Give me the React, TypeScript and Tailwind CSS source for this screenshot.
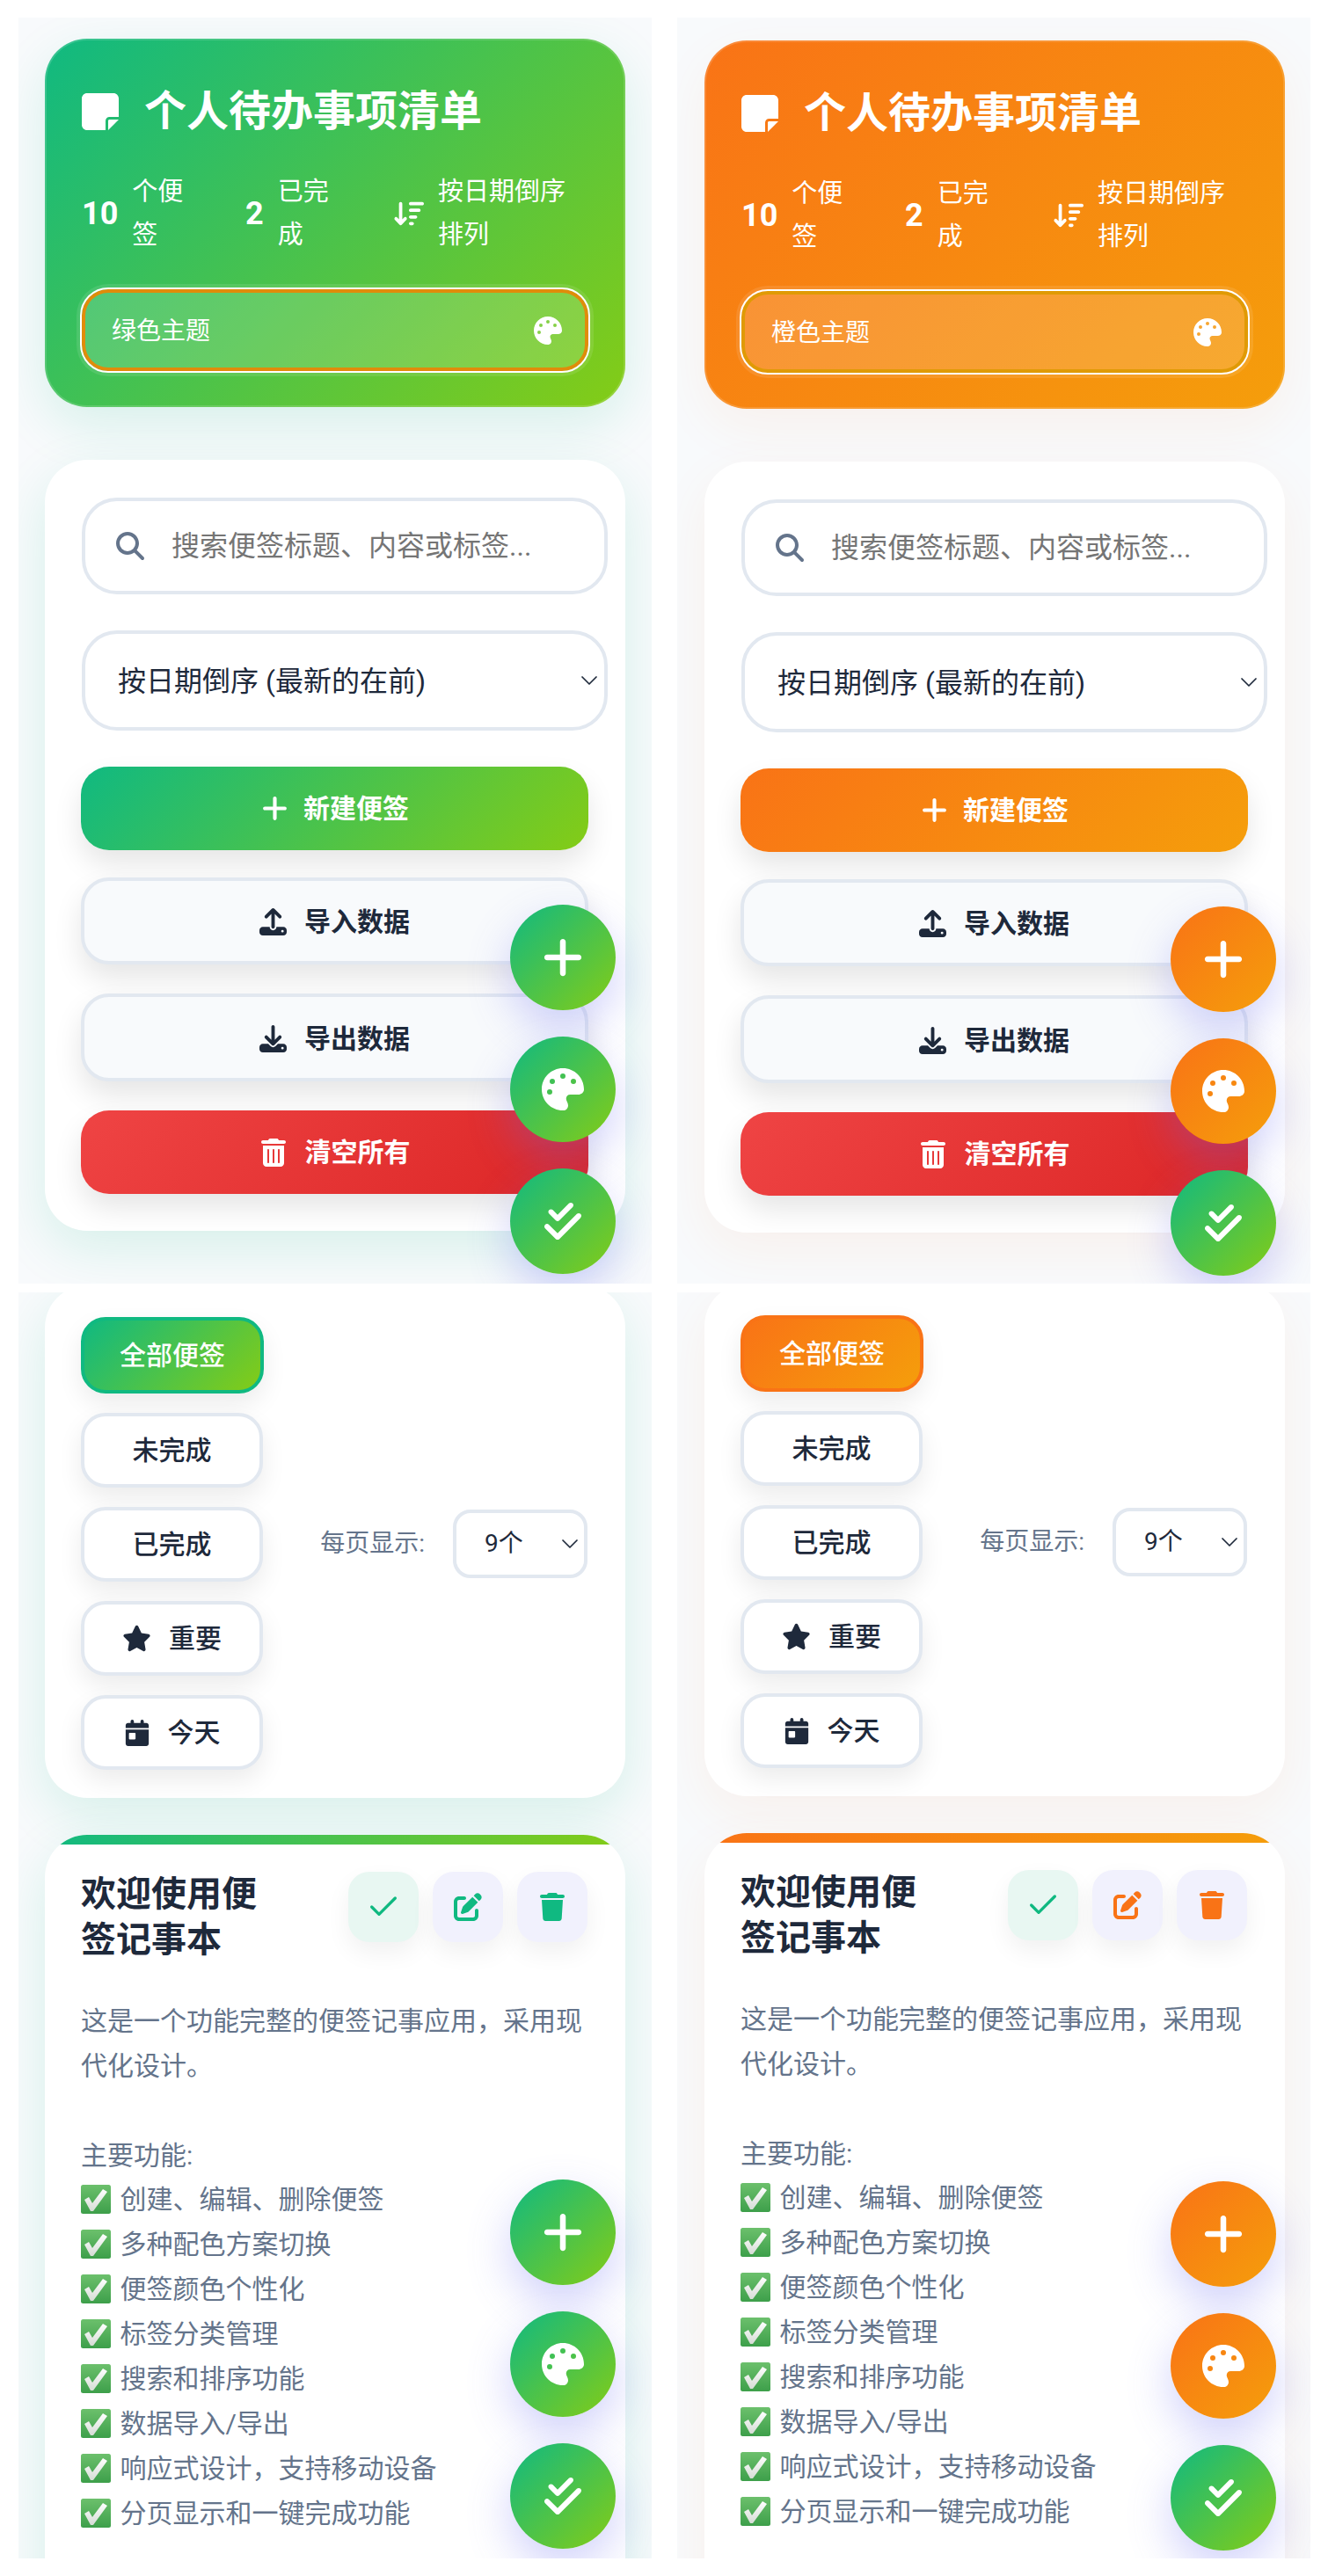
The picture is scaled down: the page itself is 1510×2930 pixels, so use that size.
import React from 'react';
import {
  FaNoteSticky, FaArrowDownWideShort, FaPalette, FaMagnifyingGlass, FaPlus, FaUpload,
  FaDownload, FaTrashCan, FaCheckDouble, FaStar, FaCalendarDay, FaPenToSquare, FaTrash,
} from 'react-icons/fa6';
import { Check, ChevronDown } from 'lucide-react';

type Theme = {
  name: string;
  gradient: string;
  bar: string;
  shadow: string;
  ring: string;
  filterBorder: string;
  accent: string;
  fab: string;
};

const green: Theme = {
  name: '绿色主题',
  gradient: 'bg-[linear-gradient(135deg,#10b981,#84cc16)]',
  bar: 'bg-[linear-gradient(90deg,#10b981,#84cc16)]',
  shadow: 'shadow-[0_20px_60px_rgba(16,185,129,0.14)]',
  ring: 'shadow-[inset_0_0_0_4px_#e08c0a,0_0_0_4px_rgba(255,255,255,0.1)]',
  filterBorder: 'border-[#10b981]',
  accent: 'text-[#10b981]',
  fab: 'bg-[linear-gradient(135deg,#10b981,#84cc16)]',
};

const orange: Theme = {
  name: '橙色主题',
  gradient: 'bg-[linear-gradient(135deg,#f97316,#f59e0b)]',
  bar: 'bg-[linear-gradient(90deg,#f97316,#f59e0b)]',
  shadow: 'shadow-[0_20px_60px_rgba(249,115,22,0.07)]',
  ring: 'shadow-[inset_0_0_0_4px_#e09a05,0_0_0_4px_rgba(255,255,255,0.1)]',
  filterBorder: 'border-[#f97316]',
  accent: 'text-[#f97316]',
  fab: 'bg-[linear-gradient(135deg,#f97316,#f59e0b)]',
};

const doneGradient = 'bg-[linear-gradient(135deg,#10b981,#84cc16)]';

const features = [
  '创建、编辑、删除便签',
  '多种配色方案切换',
  '便签颜色个性化',
  '标签分类管理',
  '搜索和排序功能',
  '数据导入/导出',
  '响应式设计，支持移动设备',
  '分页显示和一键完成功能',
];

const Fabs = ({ theme, className }: { theme: Theme; className: string }) => (
  <div className={`absolute flex flex-col gap-[30px] ${className}`}>
    <button className={`w-[120px] h-[120px] rounded-full flex items-center justify-center text-white shadow-[0_20px_50px_rgba(99,102,241,0.3)] ${theme.fab}`}>
      <FaPlus size={52} />
    </button>
    <button className={`w-[120px] h-[120px] rounded-full flex items-center justify-center text-white shadow-[0_20px_50px_rgba(99,102,241,0.3)] ${theme.fab}`}>
      <FaPalette size={48} />
    </button>
    <button className={`w-[120px] h-[120px] rounded-full flex items-center justify-center text-white shadow-[0_20px_50px_rgba(99,102,241,0.3)] ${doneGradient}`}>
      <FaCheckDouble size={48} />
    </button>
  </div>
);

const Stat = ({ value, label, width, labelWidth }: { value: React.ReactNode; label: string; width: string; labelWidth: string }) => (
  <div className={`flex items-center gap-[16px] ${width}`}>
    <span className="text-[36px] font-bold leading-none">{value}</span>
    <span className={`text-[29px] leading-[49px] ${labelWidth}`}>{label}</span>
  </div>
);

const Header = ({ theme }: { theme: Theme }) => (
  <div className={`rounded-[48px] text-white pl-[42px] pr-[38px] pt-[51px] pb-[39px] inset-ring-2 inset-ring-white/15 ${theme.gradient} ${theme.shadow}`}>
    <div className="flex items-center gap-[26px]">
      <FaNoteSticky size={48} className="-ml-[3px]" />
      <h1 className="text-[48px] leading-[64px] font-bold">个人待办事项清单</h1>
    </div>
    <div className="flex items-center mt-[35px]">
      <Stat value="10" label="个便签" width="w-[186px]" labelWidth="w-[60px]" />
      <Stat value="2" label="已完成" width="w-[169px]" labelWidth="w-[60px]" />
      <Stat value={<FaArrowDownWideShort size={34} />} label="按日期倒序排列" width="w-[206px]" labelWidth="w-[150px]" />
    </div>
    <div className={`mt-[35px] -ml-[2px] w-[580px] h-[97px] rounded-[32px] border-2 border-white bg-white/15 flex items-center justify-between pl-[34px] pr-[30px] ${theme.ring}`}>
      <span className="text-[28px] pt-[2px]">{theme.name}</span>
      <FaPalette size={32} />
    </div>
  </div>
);

const Toolbar = ({ theme }: { theme: Theme }) => (
  <div className={`mt-[60px] rounded-[48px] bg-white pl-[42px] pt-[43px] pb-[42px] ${theme.shadow}`}>
    <label className="w-[598px] h-[110px] rounded-[40px] border-[4px] border-[#e2e8f0] flex items-center gap-[31px] pl-[35px]">
      <FaMagnifyingGlass size={32} className="text-[#64748b] shrink-0" />
      <input
        className="flex-1 min-w-0 outline-none text-[32px] placeholder:text-[#757575]"
        placeholder="搜索便签标题、内容或标签..."
      />
    </label>
    <div className="mt-[41px] w-[598px] h-[114px] rounded-[40px] border-[4px] border-[#e2e8f0] flex items-center justify-between pl-[37px] text-[32px] text-[#1e293b]">
      <span className="pt-[2px]">按日期倒序 (最新的在前)</span>
      <ChevronDown size={32} strokeWidth={1.3} className="mr-[1px]" />
    </div>
    <div className="-ml-[1px] w-[577px] flex flex-col">
      <button className={`mt-[41px] h-[95px] rounded-[32px] flex items-center justify-center gap-[16px] text-white text-[30px] font-bold shadow-[0_16px_32px_rgba(0,0,0,0.1)] ${theme.gradient}`}>
        <FaPlus size={33} />新建便签
      </button>
      <button className="mt-[31px] h-[99px] rounded-[32px] border-[4px] border-[#e2e8f0] bg-[#f8fafc] flex items-center justify-center gap-[20px] pt-[2px] text-[#1e293b] text-[30px] font-bold shadow-[0_16px_32px_rgba(0,0,0,0.1)]">
        <FaUpload size={31} />导入数据
      </button>
      <button className="mt-[33px] h-[100px] rounded-[32px] border-[4px] border-[#e2e8f0] bg-[#f8fafc] flex items-center justify-center gap-[20px] pt-[2px] text-[#1e293b] text-[30px] font-bold shadow-[0_16px_32px_rgba(0,0,0,0.1)]">
        <FaDownload size={31} />导出数据
      </button>
      <button className="mt-[33px] h-[95px] rounded-[32px] bg-[linear-gradient(135deg,#ef4444,#dc2626)] flex items-center justify-center gap-[20px] text-white text-[30px] font-bold shadow-[0_16px_32px_rgba(0,0,0,0.1)]">
        <FaTrashCan size={32} />清空所有
      </button>
    </div>
  </div>
);

const filterClass = 'w-[207px] h-[85px] rounded-[28px] border-[4px] border-[#e2e8f0] bg-white flex items-center justify-center gap-[20px] text-[30px] font-medium text-[#1e293b] shadow-[0_12px_28px_rgba(0,0,0,0.08)]';

const Filters = ({ theme }: { theme: Theme }) => (
  <div className={`rounded-[48px] bg-white pl-[41px] pr-[43px] pt-[36px] pb-[32px] flex items-center justify-between ${theme.shadow}`}>
    <div className="flex flex-col gap-[22px]">
      <button className={`w-[208px] h-[87px] rounded-[28px] border-[4px] text-white text-[30px] font-medium flex items-center justify-center shadow-[0_12px_28px_rgba(0,0,0,0.08)] ${theme.gradient} ${theme.filterBorder}`}>全部便签</button>
      <button className={filterClass}>未完成</button>
      <button className={filterClass}>已完成</button>
      <button className={filterClass}><FaStar size={33} />重要</button>
      <button className={filterClass}><FaCalendarDay size={30} />今天</button>
    </div>
    <div className="flex items-center gap-[32px]">
      <span className="text-[28px] text-[#64748b]">每页显示:</span>
      <div className="w-[153px] h-[78px] rounded-[20px] border-[4px] border-[#e2e8f0] flex items-center justify-between pl-[32px] text-[28px] text-[#1e293b]">
        <span>9个</span>
        <ChevronDown size={32} strokeWidth={1.3} />
      </div>
    </div>
  </div>
);

const CheckEmoji = () => (
  <svg viewBox="0 0 34 33" className="inline-block w-[34px] h-[33px] align-[-6px] mr-[3px]" role="img" aria-label="✅">
    <defs>
      <linearGradient id="emojiBox" x1="0" y1="0" x2="0" y2="1">
        <stop offset="0" stopColor="#6cc06c" />
        <stop offset="1" stopColor="#3d9f4a" />
      </linearGradient>
      <linearGradient id="emojiTick" x1="0" y1="0" x2="0" y2="1">
        <stop offset="0" stopColor="#ffffff" />
        <stop offset="1" stopColor="#d5dcd5" />
      </linearGradient>
    </defs>
    <rect width="34" height="33" rx="2.5" fill="url(#emojiBox)" />
    <path d="M4 17 L9 14 L13 21 L25 5 L30 8 L14 30 L11 30 Z" fill="url(#emojiTick)" />
  </svg>
);

const ActionBtn = ({ tint, children }: { tint: string; children: React.ReactNode }) => (
  <button className={`w-[80px] h-[80px] rounded-[24px] flex items-center justify-center shadow-[0_12px_28px_rgba(0,0,0,0.06)] ${tint}`}>
    {children}
  </button>
);

const NoteCard = ({ theme }: { theme: Theme }) => (
  <div className={`mt-[42px] relative overflow-hidden rounded-t-[48px] bg-white pl-[41px] pr-[43px] pt-[42px] pb-[300px] ${theme.shadow}`}>
    <div className={`absolute top-0 inset-x-0 h-[11px] ${theme.bar}`} />
    <div className="flex items-start justify-between">
      <h3 className="w-[210px] text-[40px] leading-[52px] font-bold text-[#1e293b]">欢迎使用便签记事本</h3>
      <div className="flex gap-[16px]">
        <ActionBtn tint="bg-[#e8f7f2] text-[#10b981]"><Check size={40} strokeWidth={2} /></ActionBtn>
        <ActionBtn tint={`bg-[#f1f1fd] ${theme.accent}`}><FaPenToSquare size={32} /></ActionBtn>
        <ActionBtn tint={`bg-[#f1f1fd] ${theme.accent}`}><FaTrash size={32} /></ActionBtn>
      </div>
    </div>
    <div className="mt-[40px] text-[30px] leading-[51px] text-[#64748b]">
      <p>这是一个功能完整的便签记事应用，采用现代化设计。</p>
      <p className="mt-[51px]">主要功能:</p>
      <ul className="-mt-[1px]">
        {features.map((f) => (
          <li key={f}><CheckEmoji /> {f}</li>
        ))}
      </ul>
    </div>
  </div>
);

const Screen = ({ theme, children, fabClass, className }: { theme: Theme; children: React.ReactNode; fabClass: string; className: string }) => (
  <div className={`relative w-[720px] h-[1440px] overflow-hidden bg-[#f8fafc] ${className}`}>
    {children}
    <Fabs theme={theme} className={fabClass} />
  </div>
);

export default function App() {
  return (
    <div className="w-[1510px] h-[2930px] bg-white pt-[20px] pl-[21px] font-['Roboto','Noto_Sans_CJK_SC',sans-serif]">
      <div className="grid grid-cols-[720px_720px] gap-x-[29px] gap-y-[10px]">
        <Screen theme={green} fabClass="right-[41px] bottom-[11px]" className="pt-[24px] pl-[30px] pr-[30px]">
          <Header theme={green} />
          <Toolbar theme={green} />
        </Screen>
        <Screen theme={orange} fabClass="right-[39px] bottom-[9px]" className="pt-[26px] pl-[31px] pr-[29px]">
          <Header theme={orange} />
          <Toolbar theme={orange} />
        </Screen>
        <Screen theme={green} fabClass="right-[41px] bottom-[11px]" className="pl-[30px] pr-[30px]">
          <div className="-mt-[8px]">
            <Filters theme={green} />
            <NoteCard theme={green} />
          </div>
        </Screen>
        <Screen theme={orange} fabClass="right-[39px] bottom-[9px]" className="pl-[31px] pr-[29px]">
          <div className="-mt-[10px]">
            <Filters theme={orange} />
            <NoteCard theme={orange} />
          </div>
        </Screen>
      </div>
    </div>
  );
}
